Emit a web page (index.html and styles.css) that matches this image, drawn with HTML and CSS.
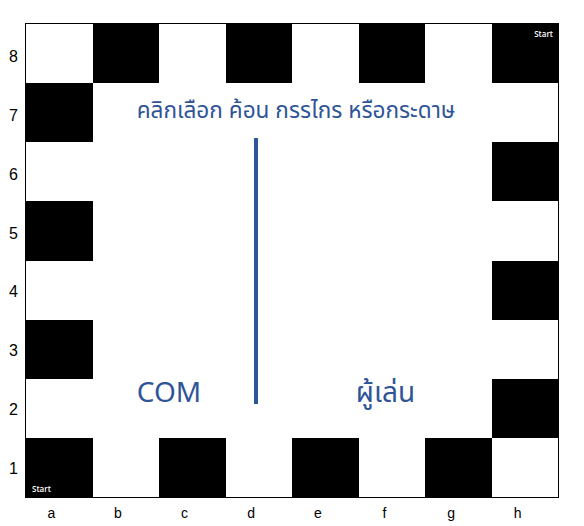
FILE: index.html
```html
<!DOCTYPE html>
<html lang="th">
<head>
    <meta charset="UTF-8" />
    <title>เป่ายิ้งฉุบ</title>
    <link rel="stylesheet" href="styles.css">
</head>
<body>
    <div class="page">
        <div class="row-labels">
            <span>8</span><span>7</span><span>6</span><span>5</span>
            <span>4</span><span>3</span><span>2</span><span>1</span>
        </div>

        <div class="board">
            <!-- row 8 -->
            <div class="sq light"></div>
            <div class="sq dark"></div>
            <div class="sq light"></div>
            <div class="sq dark"></div>
            <div class="sq light"></div>
            <div class="sq dark"></div>
            <div class="sq light"></div>
            <div class="sq dark start-top"><span class="start">Start</span></div>

            <!-- row 7 + middle panel -->
            <div class="sq dark"></div>
            <div class="middle">
                <h1 class="title">คลิกเลือก ค้อน กรรไกร หรือกระดาษ</h1>
                <div class="versus">
                    <div class="side side-com">COM</div>
                    <div class="divider"></div>
                    <div class="side side-player">ผู้เล่น</div>
                </div>
            </div>
            <div class="sq light"></div>

            <!-- rows 6 - 2 -->
            <div class="sq light"></div>
            <div class="sq dark"></div>
            <div class="sq dark"></div>
            <div class="sq light"></div>
            <div class="sq light"></div>
            <div class="sq dark"></div>
            <div class="sq dark"></div>
            <div class="sq light"></div>
            <div class="sq light"></div>
            <div class="sq dark"></div>

            <!-- row 1 -->
            <div class="sq dark start-bottom"><span class="start">Start</span></div>
            <div class="sq light"></div>
            <div class="sq dark"></div>
            <div class="sq light"></div>
            <div class="sq dark"></div>
            <div class="sq light"></div>
            <div class="sq dark"></div>
            <div class="sq light"></div>
        </div>

        <div></div>
        <div class="col-labels">
            <span>a</span><span>b</span><span>c</span><span>d</span>
            <span>e</span><span>f</span><span>g</span><span>h</span>
        </div>
    </div>
</body>
</html>
```

FILE: styles.css
```css
/* Page */
body {
    margin: 0;
    background: #ffffff;
    font-family: 'Liberation Sans', Arial, sans-serif;
    color: #000;
}

.page {
    display: grid;
    grid-template-columns: 26px 533px;
    grid-template-rows: 475px 28px;
    padding-top: 23px;
}

/* Row / column labels */
.row-labels {
    display: flex;
    flex-direction: column;
    padding-top: 5px;
}

.row-labels span {
    flex: 1;
    display: flex;
    align-items: center;
    justify-content: center;
    font-size: 16px;
    padding-left: 1px;
}

.col-labels {
    display: flex;
    padding-top: 7px;
}

.col-labels span {
    flex: 1;
    text-align: center;
    font-size: 14px;
    padding-right: 16px;
}

/* Board */
.board {
    display: grid;
    grid-template-columns: repeat(8, 1fr);
    grid-template-rows: repeat(8, 1fr);
    border: 1px solid #000;
    box-sizing: border-box;
    margin-left: -1px;
}

.sq.dark {
    background: #000;
}

.sq.light {
    background: #fff;
}

.sq {
    display: flex;
}

.start {
    color: #fff;
    font-family: 'Open Sans', 'Noto Sans', sans-serif;
    font-size: 8px;
    font-weight: 600;
}

.start-top {
    justify-content: flex-end;
    align-items: flex-start;
    padding: 4px 5px 0 0;
}

.start-bottom {
    align-items: flex-end;
    padding: 0 0 3px 6px;
}

/* Middle panel */
.middle {
    grid-column: 2 / 8;
    grid-row: 2 / 8;
    display: flex;
    flex-direction: column;
    color: #2f5597;
    font-family: 'Noto Sans Thai', 'Leelawadee UI', 'Noto Sans', 'Open Sans', sans-serif;
}

.title {
    margin: 10px 0 0;
    font-size: 22.6px;
    font-weight: 400;
    text-align: center;
    padding-left: 8px;
    line-height: 36px;
}

.versus {
    flex: 1;
    display: grid;
    grid-template-columns: 161px 4px 1fr;
    align-items: end;
    padding: 9px 0 34px;
}

.divider {
    align-self: stretch;
    background: #2b579a;
}

.side {
    font-size: 28px;
    text-align: center;
    line-height: 34px;
    margin-bottom: -7px;
}

.side-com {
    padding-right: 8px;
}

.side-player {
    padding-left: 22px;
}
```
